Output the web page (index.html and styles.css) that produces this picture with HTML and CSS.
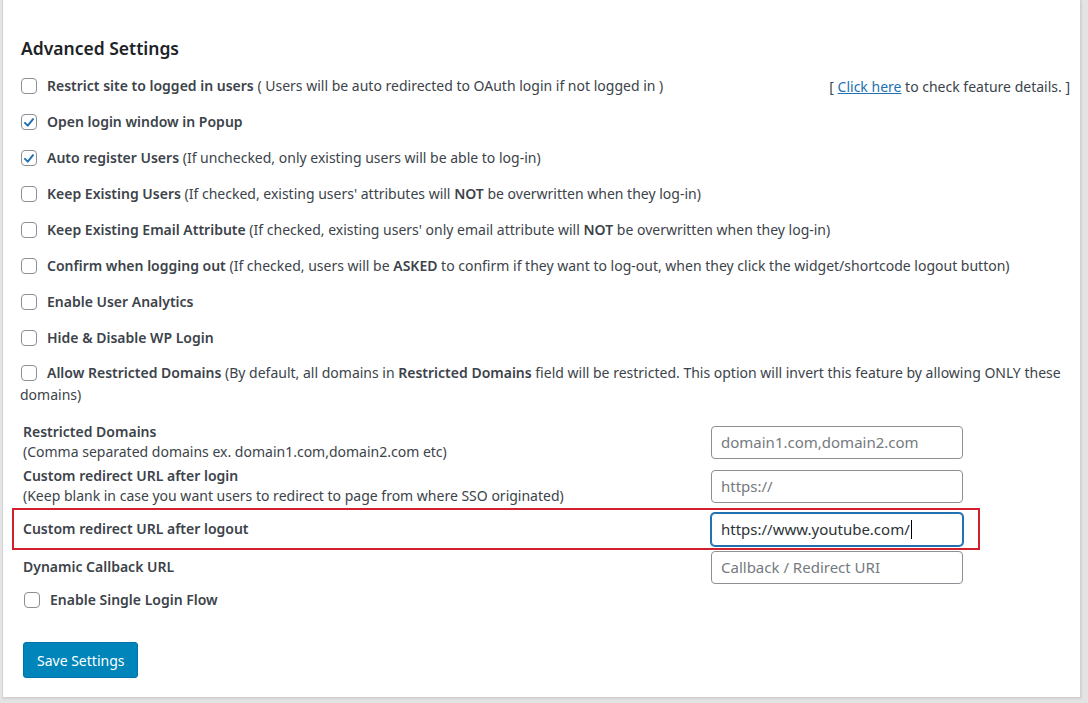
FILE: index.html
```html
<!DOCTYPE html>
<html>
<head>
<meta charset="utf-8">
<link rel="stylesheet" href="styles.css">
</head>
<body>
<div class="card">
  <h3 class="title">Advanced Settings</h3>
  <div class="opts">
    <div class="opt opt-split">
      <label class="chk"><span class="box"></span><span><b>Restrict site to logged in users</b> ( Users will be auto redirected to OAuth login if not logged in )</span></label>
      <span class="details">[ <a href="#">Click here</a> to check feature details. ]</span>
    </div>
    <div class="opt"><label class="chk"><span class="box on"><svg viewBox="0 0 16 16"><path d="M3.4 8.4 L6.6 11.6 L12.6 4.2" /></svg></span><span><b>Open login window in Popup</b></span></label></div>
    <div class="opt"><label class="chk"><span class="box on"><svg viewBox="0 0 16 16"><path d="M3.4 8.4 L6.6 11.6 L12.6 4.2" /></svg></span><span><b>Auto register Users</b> (If unchecked, only existing users will be able to log-in)</span></label></div>
    <div class="opt"><label class="chk"><span class="box"></span><span><b>Keep Existing Users</b> (If checked, existing users' attributes will <b>NOT</b> be overwritten when they log-in)</span></label></div>
    <div class="opt"><label class="chk"><span class="box"></span><span><b>Keep Existing Email Attribute</b> (If checked, existing users' only email attribute will <b>NOT</b> be overwritten when they log-in)</span></label></div>
    <div class="opt"><label class="chk"><span class="box"></span><span><b>Confirm when logging out</b> (If checked, users will be <b>ASKED</b> to confirm if they want to log-out, when they click the widget/shortcode logout button)</span></label></div>
    <div class="opt"><label class="chk"><span class="box"></span><span><b>Enable User Analytics</b></span></label></div>
    <div class="opt"><label class="chk"><span class="box"></span><span><b>Hide &amp; Disable WP Login</b></span></label></div>
    <div class="opt opt-wrap"><p class="para"><span class="line1"><span class="box inl"></span><b>Allow Restricted Domains</b> (By default, all domains in <b>Restricted Domains</b> field will be restricted. This option will invert this feature by allowing ONLY these</span><br><span class="line2">domains)</span></p></div>
  </div>

  <div class="fields">
    <div class="field">
      <div class="lbl"><strong>Restricted Domains</strong><span class="sub">(Comma separated domains ex. domain1.com,domain2.com etc)</span></div>
      <input class="inp" type="text" placeholder="domain1.com,domain2.com">
    </div>
    <div class="field">
      <div class="lbl"><strong>Custom redirect URL after login</strong><span class="sub">(Keep blank in case you want users to redirect to page from where SSO originated)</span></div>
      <input class="inp" type="text" placeholder="https://">
    </div>
    <div class="field field-hl">
      <div class="lbl"><strong>Custom redirect URL after logout</strong></div>
      <div class="inp focus">https://www.youtube.com/<span class="caret"></span></div>
    </div>
    <div class="field">
      <div class="lbl"><strong>Dynamic Callback URL</strong></div>
      <input class="inp" type="text" placeholder="Callback / Redirect URI">
    </div>
  </div>

  <label class="chk single"><span class="box"></span><span><strong>Enable Single Login Flow</strong></span></label>

  <button class="save" type="button">Save Settings</button>
</div>
</body>
</html>
```

FILE: styles.css
```css
html, body {
  margin: 0;
  padding: 0;
}
body {
  background: #e4e4e4;
  font-family: "Noto Sans", "Open Sans", sans-serif;
  font-size: 14px;
  color: #3c434a;
  height: 703px;
  overflow: hidden;
}
.card {
  box-sizing: border-box;
  width: 1079px;
  height: 698px;
  margin-left: 2px;
  background: #fff;
  border: 1px solid #d0d0d0;
  border-top: none;
  padding: 37px 0 0 17px;
  box-shadow: 1px 1px 2px rgba(0,0,0,0.08);
}
.title {
  margin: 0 0 8px 1px;
  font-size: 17.5px;
  font-weight: 600;
  color: #1d2327;
  line-height: 23px;
}
.opts {
  padding-right: 10px;
}
.opt {
  min-height: 36px;
  display: flex;
  align-items: center;
}
.opt-split {
  justify-content: space-between;
}
.chk {
  display: flex;
  align-items: center;
  gap: 10px;
  line-height: 20px;
}
b, strong {
  font-weight: 600;
}
.box {
  flex: none;
  box-sizing: border-box;
  width: 16px;
  height: 16px;
  border: 1px solid #8c8f94;
  border-radius: 4px;
  background: #fff;
  display: inline-flex;
  align-items: center;
  justify-content: center;
  margin-left: 1px;
}
.box svg {
  width: 15px;
  height: 15px;
  fill: none;
  stroke: #2271b1;
  stroke-width: 2.3;
  stroke-linecap: round;
  stroke-linejoin: round;
}
.details {
  color: #3c434a;
}
.details a {
  color: #2271b1;
  text-decoration: underline;
}
.opt-wrap {
  align-items: flex-start;
  padding-top: 6px;
}
.para {
  margin: 0;
  line-height: 22px;
}
.line1 {
  white-space: nowrap;
}
.box.inl {
  vertical-align: -3px;
  margin-right: 10px;
}
.fields {
  margin-top: 14px;
  padding-left: 3px;
  width: 940px;
  display: flex;
  flex-direction: column;
}
.field {
  display: flex;
  align-items: center;
  justify-content: space-between;
  min-height: 44px;
}
.lbl {
  display: flex;
  flex-direction: column;
  line-height: 20px;
}
.inp {
  box-sizing: border-box;
  width: 252px;
  height: 33px;
  border: 1px solid #8c8f94;
  border-radius: 4px;
  padding: 0 9px;
  font: inherit;
  font-size: 15px;
  color: #2c3338;
  background: #fff;
  display: flex;
  align-items: center;
}
.inp::placeholder {
  color: #757a80;
}
.field-hl {
  outline: 2px solid #d0202e;
  margin: 2px -15px -3px -9px;
  padding: 0 15px 0 9px;
  min-height: 38px;
}
.inp.focus {
  border: 1px solid #2271b1;
  box-shadow: 0 0 0 1px #2271b1;
}
.caret {
  display: inline-block;
  width: 1px;
  height: 19px;
  background: #000;
  margin-left: 1px;
}
.single {
  margin: 1px 0 0 3px;
}
.save {
  display: block;
  margin: 32px 0 0 3px;
  background: #0085ba;
  color: #fff;
  border: 1px solid #0073aa;
  border-radius: 3px;
  font-family: inherit;
  font-size: 14px;
  height: 36px;
  padding: 0 13px;
}
```
